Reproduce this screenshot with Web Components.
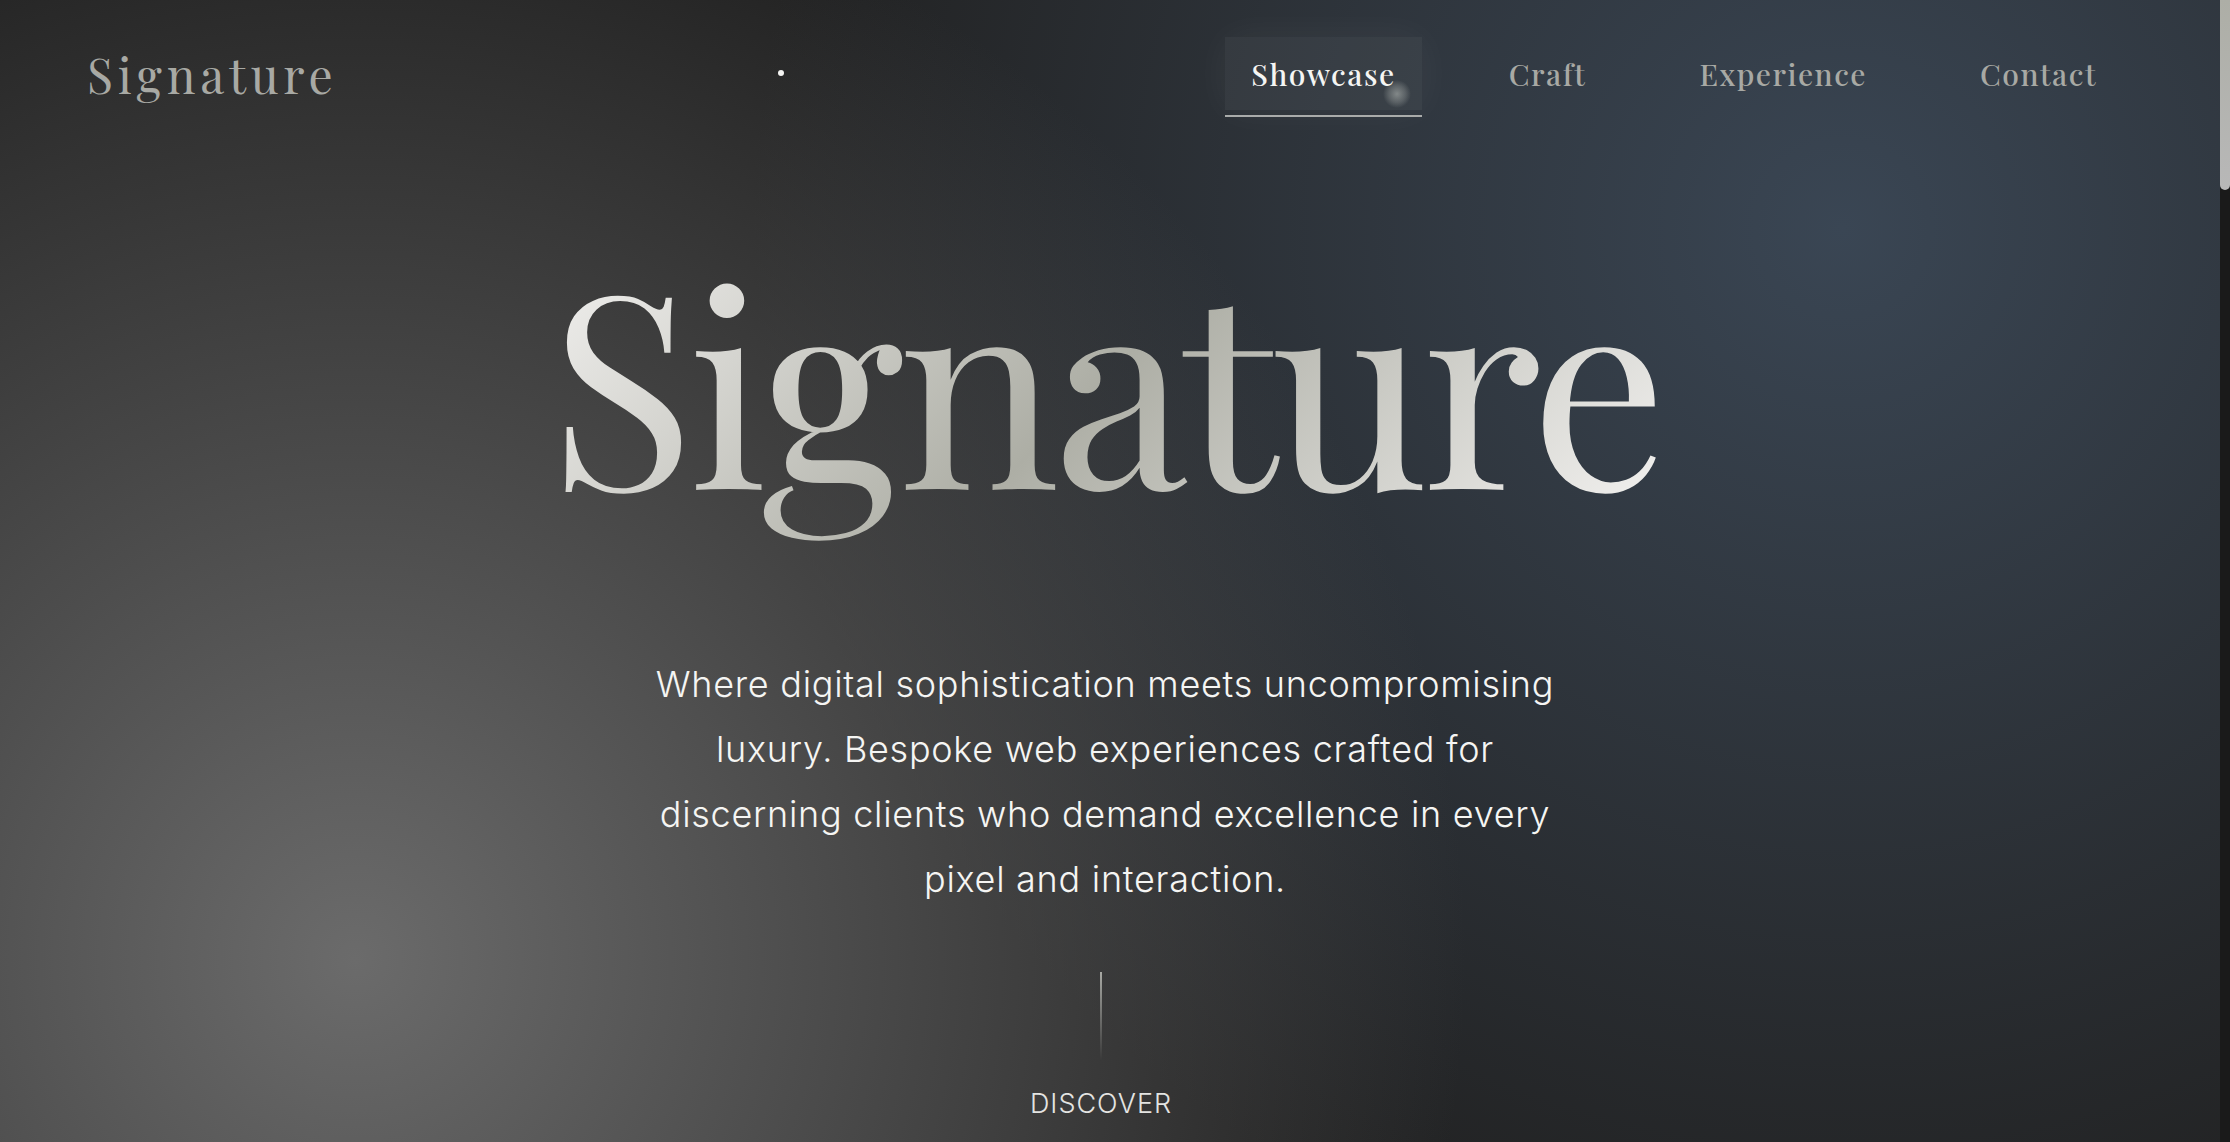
<!DOCTYPE html>
<html lang="en">
<head>
<meta charset="utf-8">
<title>Signature</title>
<style>
html,body{margin:0;height:100%;background:#222}
body{--serif:"Playfair Display","Liberation Serif",serif;--sans:Inter,"Liberation Sans",sans-serif;--muted:#a8a9a4;overflow:hidden}
</style>
</head>
<body>
<signature-page></signature-page>
<script>
const define=(name,html)=>customElements.define(name,class extends HTMLElement{
  constructor(){super();this.attachShadow({mode:"open"}).innerHTML=html;}
});
customElements.define("nav-link",class extends HTMLElement{
  constructor(){
    super();
    this.attachShadow({mode:"open"}).innerHTML=`<style>
    :host{display:block}
    a{display:block;position:relative;padding:19px 26px 17px;font:500 30px/37px var(--serif);letter-spacing:.05em;color:var(--muted);text-decoration:none}
    :host([active]) a{color:#f5f5f3;background:rgba(255,255,255,.05);box-shadow:0 0 40px rgba(255,255,255,.05)}
    :host([active]) a::after{content:"";position:absolute;left:0;right:0;bottom:-7px;height:2px;background:#a9abaa}
    </style><a><slot></slot></a>`;
  }
  connectedCallback(){this.shadowRoot.querySelector("a").href=this.getAttribute("to");}
});
define("site-header",`<style>
:host{display:flex;justify-content:space-between;align-items:center;padding:37px 97px 0 87px}
.logo{font:400 48px/60px var(--serif);letter-spacing:.1em;color:var(--muted);text-decoration:none}
nav{display:flex;gap:61px}
</style>
<a class="logo" href="#top">Signature</a>
<nav><nav-link to="#showcase" active>Showcase</nav-link><nav-link to="#craft">Craft</nav-link><nav-link to="#experience">Experience</nav-link><nav-link to="#contact">Contact</nav-link></nav>`);
define("scroll-cue",`<style>
:host{display:flex;flex-direction:column;align-items:center;gap:24px;padding-right:8px}
i{width:2px;height:88px;background:linear-gradient(#a8a9a4,transparent)}
a{font:300 27px/40px var(--sans);letter-spacing:1px;color:#e4e4e2;text-decoration:none}
</style><i></i><a href="#showcase">DISCOVER</a>`);
define("hero-section",`<style>
:host{display:flex;flex-direction:column;align-items:center;padding:88px 10px 0 0}
h1{margin:0;font:400 270px/360px var(--serif);letter-spacing:-6px;color:transparent;background:linear-gradient(135deg,#f0efed 5%,#adaea5 50%,#f0efed 95%);-webkit-background-clip:text;background-clip:text}
p{margin:94px 0 60px;max-width:930px;font:300 36px/65px var(--sans);letter-spacing:.02em;text-align:center;color:#f5f5f3}
</style>
<h1>Signature</h1>
<p>Where digital sophistication meets uncompromising luxury. Bespoke web experiences crafted for discerning clients who demand excellence in every pixel and interaction.</p>
<scroll-cue></scroll-cue>`);
define("pointer-light",`<style>
:host{position:absolute;left:1383px;top:80px;width:28px;height:28px;border-radius:50%;background:radial-gradient(circle closest-side,rgba(190,195,190,.55),rgba(190,195,190,.25) 60%,transparent);pointer-events:none}
</style>`);
define("drift-particle",`<style>
:host{position:absolute;left:778px;top:70px;width:6px;height:6px;border-radius:50%;background:#f5f5f3}
</style>`);
define("scroll-track",`<style>
:host{display:block;width:10px;background:#1a1a1a}
i{display:block;height:190px;border-radius:0 0 5px 5px;background:linear-gradient(#adaea6,#b8b8b8)}
</style><i></i>`);
define("signature-page",`<style>
:host{display:flex;min-height:100vh;position:relative}
main{flex:1;min-width:0;background:radial-gradient(circle at 16% 84%,rgba(107,107,107,1),rgba(107,107,107,0) 53%),radial-gradient(circle at 83% 20%,rgba(58,70,84,1),rgba(58,70,84,0) 53%),#212121}
</style>
<main><site-header></site-header><hero-section></hero-section></main>
<scroll-track></scroll-track><drift-particle></drift-particle><pointer-light></pointer-light>`);
</script>
</body>
</html>
